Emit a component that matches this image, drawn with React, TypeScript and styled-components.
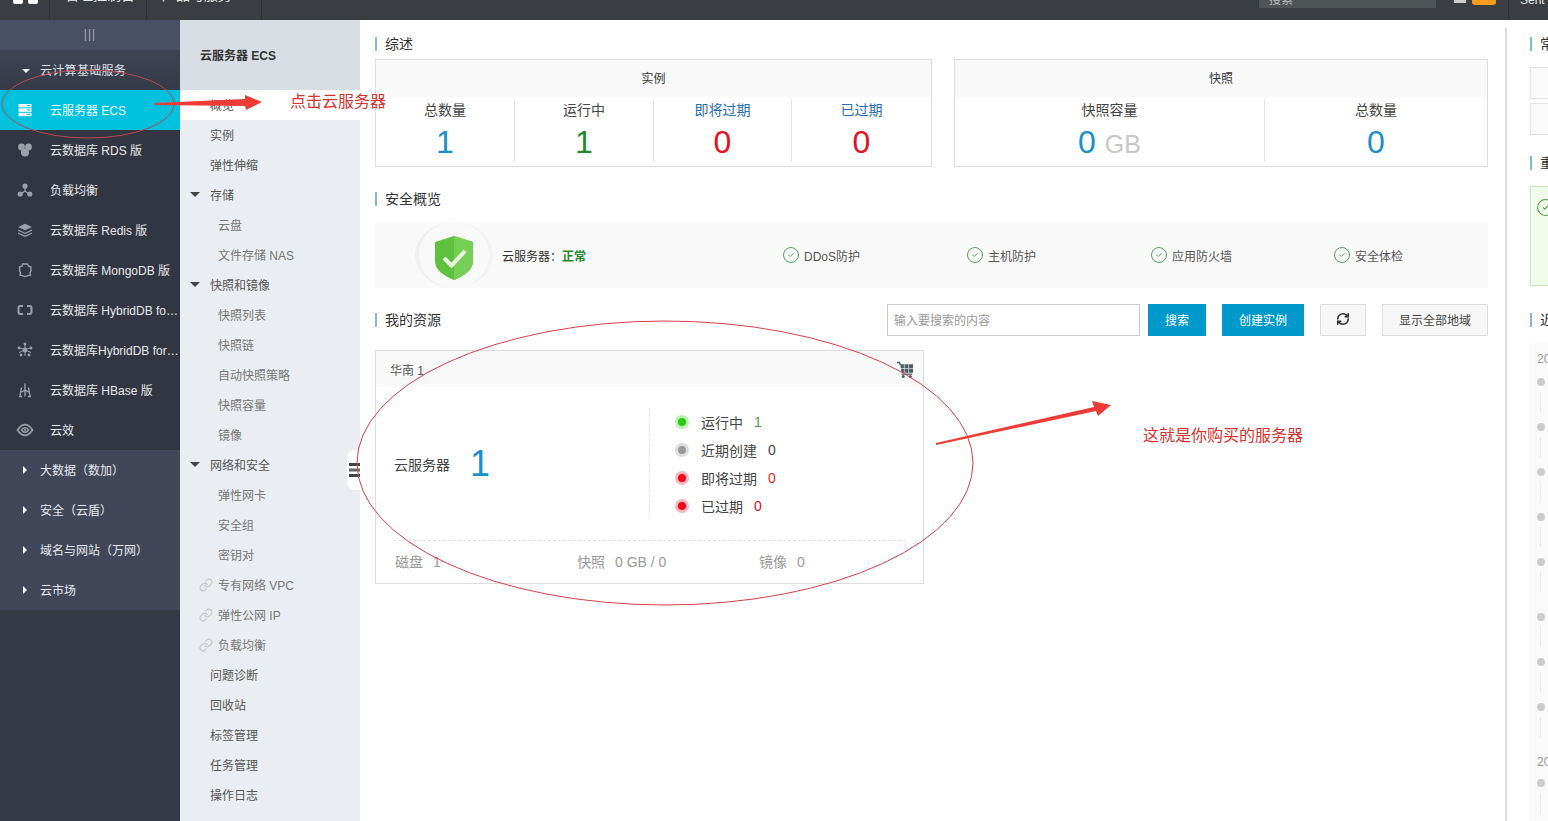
import React from 'react';
import styled, { createGlobalStyle } from 'styled-components';
import { CircleCheck, Link, RefreshCw } from 'lucide-react';

const GlobalStyle = createGlobalStyle`
  html, body { margin: 0; padding: 0; background: #fff; }
  body {
    font-family: "Liberation Sans", "Noto Sans CJK SC", sans-serif;
    font-size: 12px;
    color: #333;
  }
  * { box-sizing: border-box; }
`;

type IconKind = 'ecs' | 'rds' | 'slb' | 'redis' | 'mongo' | 'hybrid' | 'star' | 'hbase' | 'eye';

const ProductIcon: React.FC<{ kind: IconKind; active?: boolean }> = ({ kind, active }) => {
  const c = active ? '#fff' : '#9ba0aa';
  return (
    <svg width="18" height="18" viewBox="0 0 18 18" fill={c} stroke="none">
      {kind === 'ecs' && (
        <>
          <rect x="2.5" y="3" width="13" height="3.4" />
          <rect x="2.5" y="7.4" width="13" height="3.4" />
          <rect x="2.5" y="11.8" width="13" height="3.4" />
          <rect x="11" y="4" width="3" height="1" fill="#00c1de" />
          <rect x="11" y="8.4" width="3" height="1" fill="#00c1de" />
          <rect x="11" y="12.8" width="3" height="1" fill="#00c1de" />
        </>
      )}
      {kind === 'rds' && (
        <>
          <circle cx="5.5" cy="6" r="3.4" />
          <circle cx="12.5" cy="6" r="3.4" />
          <circle cx="9" cy="11.5" r="4" />
        </>
      )}
      {kind === 'slb' && (
        <>
          <circle cx="9" cy="5" r="2.6" />
          <circle cx="4.2" cy="13" r="2.6" />
          <circle cx="13.8" cy="13" r="2.6" />
          <path d="M9 7v3M9 10l-4 3M9 10l4 3" stroke={c} strokeWidth="1.2" fill="none" />
        </>
      )}
      {kind === 'redis' && (
        <>
          <path d="M9 2.8 16 6 9 9.2 2 6z" />
          <path d="M2 8.6 9 11.8l7-3.2v1.2L9 13 2 9.8z" />
          <path d="M2 11.4 9 14.6l7-3.2v1.4L9 16 2 12.8z" />
        </>
      )}
      {kind === 'mongo' && (
        <g fill="none" stroke={c} strokeWidth="1.4">
          <path d="M6.5 3h5l1 2.2 2.4.6v4.4l-1 1.6.6 2.4-2.4.4L9 15.6l-2.6-1-2.4-.4.6-2.4-1-1.6V5.8l2.4-.6z" />
        </g>
      )}
      {kind === 'hybrid' && (
        <g fill="none" stroke={c} strokeWidth="2">
          <path d="M7 5H4.5Q2.5 5 2.5 7v4q0 2 2 2H7" />
          <path d="M11 5h2.5q2 0 2 2v4q0 2-2 2H11" />
        </g>
      )}
      {kind === 'star' && (
        <>
          <path d="M9 3v12M3 6.5l12 5M15 6.5l-12 5" stroke={c} strokeWidth="1" />
          <circle cx="9" cy="9" r="2.4" />
          <circle cx="9" cy="3" r="1.4" />
          <circle cx="3" cy="7" r="1.4" />
          <circle cx="15" cy="7" r="1.4" />
          <circle cx="5" cy="14" r="1.4" />
          <circle cx="13" cy="14" r="1.4" />
        </>
      )}
      {kind === 'hbase' && (
        <g fill="none" stroke={c} strokeWidth="1.4">
          <path d="M9 2.5v13M5.5 6.5 4 15M12.5 6.5 14 15M3 15.5h3M12 15.5h3M9 9 5.5 11M9 9l3.5 2" />
        </g>
      )}
      {kind === 'eye' && (
        <>
          <path d="M1.5 9Q5 3.6 9 3.6T16.5 9Q13 14.4 9 14.4T1.5 9z" fill="none" stroke={c} strokeWidth="1.7" />
          <path d="M5.5 9Q7 6.8 9 6.8T12.5 9Q11 11.2 9 11.2T5.5 9z" fill="none" stroke={c} strokeWidth="1.4" />
          <circle cx="9" cy="9" r="1" />
        </>
      )}
    </svg>
  );
};

const CartIcon: React.FC = () => (
  <svg width="16" height="17" viewBox="0 0 16 17">
    <path d="M0 1.5h2.4l1 2.6" fill="none" stroke="#4c5d68" strokeWidth="1.5" />
    <path d="M3.2 3.2H16v8.6H4.6z" fill="#4c5d68" />
    <path d="M7.4 3.2v8.6M11.6 3.2v8.6M3.8 7.5H16" stroke="#dfe5e8" strokeWidth="0.7" />
    <path d="M4.6 13.2h10.6" stroke="#4c5d68" strokeWidth="1.3" />
    <circle cx="6.2" cy="15.4" r="1.5" fill="#4c5d68" />
    <circle cx="13.4" cy="15.4" r="1.5" fill="#4c5d68" />
  </svg>
);

const products: { kind: IconKind; label: string; active?: boolean }[] = [
  { kind: 'ecs', label: '云服务器 ECS', active: true },
  { kind: 'rds', label: '云数据库 RDS 版' },
  { kind: 'slb', label: '负载均衡' },
  { kind: 'redis', label: '云数据库 Redis 版' },
  { kind: 'mongo', label: '云数据库 MongoDB 版' },
  { kind: 'hybrid', label: '云数据库 HybridDB for MySQL' },
  { kind: 'star', label: '云数据库HybridDB for PostgreSQL' },
  { kind: 'hbase', label: '云数据库 HBase 版' },
  { kind: 'eye', label: '云效' },
];

const groups = ['大数据（数加）', '安全（云盾）', '域名与网站（万网）', '云市场'];

type SubKind = 'active' | 'top' | 'open' | 'child' | 'link';

const subItems: { kind: SubKind; label: string }[] = [
  { kind: 'active', label: '概览' },
  { kind: 'top', label: '实例' },
  { kind: 'top', label: '弹性伸缩' },
  { kind: 'open', label: '存储' },
  { kind: 'child', label: '云盘' },
  { kind: 'child', label: '文件存储 NAS' },
  { kind: 'open', label: '快照和镜像' },
  { kind: 'child', label: '快照列表' },
  { kind: 'child', label: '快照链' },
  { kind: 'child', label: '自动快照策略' },
  { kind: 'child', label: '快照容量' },
  { kind: 'child', label: '镜像' },
  { kind: 'open', label: '网络和安全' },
  { kind: 'child', label: '弹性网卡' },
  { kind: 'child', label: '安全组' },
  { kind: 'child', label: '密钥对' },
  { kind: 'link', label: '专有网络 VPC' },
  { kind: 'link', label: '弹性公网 IP' },
  { kind: 'link', label: '负载均衡' },
  { kind: 'top', label: '问题诊断' },
  { kind: 'top', label: '回收站' },
  { kind: 'top', label: '标签管理' },
  { kind: 'top', label: '任务管理' },
  { kind: 'top', label: '操作日志' },
];

const instanceStats = [
  { label: '总数量', value: '1', color: '#1a8fc9' },
  { label: '运行中', value: '1', color: '#1f8a2e' },
  { label: '即将过期', value: '0', color: '#e8101e', link: true },
  { label: '已过期', value: '0', color: '#e8101e', link: true },
];

const statuses = [
  { label: '运行中', value: '1', dot: '#2ac913', ring: '#bdf0b4', color: '#4f9f4a' },
  { label: '近期创建', value: '0', dot: '#999', ring: '#ddd', color: '#444' },
  { label: '即将过期', value: '0', dot: '#f2041c', ring: '#fbb9bb', color: '#d9301e' },
  { label: '已过期', value: '0', dot: '#f2041c', ring: '#fbb9bb', color: '#d9101e' },
];

const timeline: { year?: boolean; height: number }[] = [
  { year: true, height: 35 },
  { height: 45 },
  { height: 45 },
  { height: 45 },
  { height: 45 },
  { height: 55 },
  { height: 45 },
  { height: 45 },
  { height: 43 },
  { year: true, height: 33 },
  { height: 45 },
];

const App: React.FC = () => (
  <Page>
    <GlobalStyle />
    <TopBar>
      <TopLogo>
        <span />
        <span />
      </TopLogo>
      <TopTab $width={97}>管理控制台</TopTab>
      <TopTab $width={115}>产品与服务</TopTab>
      <TopRight>
        <TopSearch>搜索</TopSearch>
        <TopBell />
        <TopBadge />
        <TopUser>Sent</TopUser>
      </TopRight>
    </TopBar>

    <Body>
      <Sidebar>
        <Collapse>|||</Collapse>
        <GroupHead>
          <CaretDown />
          <RowText>云计算基础服务</RowText>
        </GroupHead>
        {products.map((item) => (
          <ProductRow key={item.label} $active={item.active}>
            <ProductIcon kind={item.kind} active={item.active} />
            <RowText>{item.label}</RowText>
          </ProductRow>
        ))}
        <ClosedGroups>
          {groups.map((group) => (
            <ClosedRow key={group}>
              <CaretRight />
              <RowText>{group}</RowText>
            </ClosedRow>
          ))}
        </ClosedGroups>
      </Sidebar>

      <SubNav>
        <SubTitle>云服务器 ECS</SubTitle>
        {subItems.map((item) => (
          <SubRow key={item.label + item.kind} $kind={item.kind}>
            {item.kind === 'open' && <SubCaret />}
            {item.kind === 'link' && (
              <LinkMark>
                <Link size={14} strokeWidth={2.4} />
              </LinkMark>
            )}
            {item.label}
          </SubRow>
        ))}
      </SubNav>

      <Main>
        <SectionTitle>综述</SectionTitle>
        <Overview>
          <StatCard $width={557}>
            <CardHead>实例</CardHead>
            <StatGrid $columns="138px 139px 138px 1fr">
              {instanceStats.map((stat) => (
                <Stat key={stat.label}>
                  <StatLabel $link={stat.link}>{stat.label}</StatLabel>
                  <StatValue $color={stat.color}>{stat.value}</StatValue>
                </Stat>
              ))}
            </StatGrid>
          </StatCard>
          <StatCard $width={534}>
            <CardHead>快照</CardHead>
            <StatGrid $columns="309px 1fr">
              <Stat>
                <StatLabel>快照容量</StatLabel>
                <StatValue $color="#1a8fc9">
                  0 <StatUnit>GB</StatUnit>
                </StatValue>
              </Stat>
              <Stat>
                <StatLabel>总数量</StatLabel>
                <StatValue $color="#1a8fc9">0</StatValue>
              </Stat>
            </StatGrid>
          </StatCard>
        </Overview>

        <SecurityTitle>安全概览</SecurityTitle>
        <SecurityBand>
          <SecurityStatus>
            <ShieldHalo>
              <svg width="38" height="44" viewBox="0 0 38 44">
                <path d="M19 0 38 6v19c0 9-9 15-19 19C9 40 0 34 0 25V6z" fill="#5fc13f" />
                <path d="M19 0 38 6v19c0 9-9 15-19 19z" fill="#75cf55" />
                <path d="M9 22l7.5 7.5L30 15" fill="none" stroke="#e8f7df" strokeWidth="4" />
              </svg>
            </ShieldHalo>
            <span>
              云服务器：<StatusOk>正常</StatusOk>
            </span>
          </SecurityStatus>
          {['DDoS防护', '主机防护', '应用防火墙', '安全体检'].map((label) => (
            <CheckItem key={label}>
              <CircleCheck size={18} strokeWidth={1.2} color="#3f9a48" />
              {label}
            </CheckItem>
          ))}
        </SecurityBand>

        <Toolbar>
          <ToolbarTitle>我的资源</ToolbarTitle>
          <SearchGroup>
            <SearchInput placeholder="输入要搜索的内容" readOnly />
            <ToolButton $primary $width={58}>搜索</ToolButton>
          </SearchGroup>
          <ToolButton $primary $width={82}>创建实例</ToolButton>
          <ToolButton $width={46}>
            <RefreshCw size={14} strokeWidth={2.8} color="#333" />
          </ToolButton>
          <ToolButton $width={106}>显示全部地域</ToolButton>
        </Toolbar>

        <RegionCard>
          <RegionHead>
            华南 1
            <CartIcon />
          </RegionHead>
          <RegionBody>
            <RegionMain>
              云服务器
              <RegionCount>1</RegionCount>
            </RegionMain>
            <StatusList>
              {statuses.map((status) => (
                <StatusRow key={status.label}>
                  <StatusDot $dot={status.dot} $ring={status.ring} />
                  {status.label}
                  <StatusCount $color={status.color}>{status.value}</StatusCount>
                </StatusRow>
              ))}
            </StatusList>
          </RegionBody>
          <RegionFoot>
            <span>磁盘<FootValue>1</FootValue></span>
            <span>快照<FootValue>0 GB / 0</FootValue></span>
            <span>镜像<FootValue>0</FootValue></span>
          </RegionFoot>
        </RegionCard>
      </Main>

      <RightPanel>
        <SectionTitle>常用操作</SectionTitle>
        <ShortcutBox />
        <ShortcutBox />
        <NoticeTitle>重要通知</NoticeTitle>
        <NoticeBox>
          <CircleCheck size={19} strokeWidth={1.3} color="#4f9a48" />
        </NoticeBox>
        <RecentTitle>近期动态</RecentTitle>
        <Timeline>
          {timeline.map((entry, i) => (
            <TimelineEntry key={i} style={{ height: entry.height }}>
              {entry.year ? <YearMark>2016</YearMark> : <TimelineDot />}
            </TimelineEntry>
          ))}
        </Timeline>
      </RightPanel>
    </Body>

    <HandleTab>
      <svg width="11" height="14" viewBox="0 0 11 14" fill="#444">
        <rect y="0" width="11" height="3" />
        <rect y="5.5" width="11" height="3" fill="#666" />
        <rect y="11" width="11" height="3" />
      </svg>
    </HandleTab>

    <Markup width="1548" height="821" viewBox="0 0 1548 821">
      <ellipse cx="88" cy="104" rx="86" ry="34" fill="none" stroke="#b8484e" strokeWidth="1" />
      <ellipse cx="665" cy="463" rx="308" ry="142" fill="none" stroke="#d8404a" strokeWidth="1" />
      <polygon points="155,103 245,99 245,95 262,102 246,110 245,106 155,105" fill="#ee3b36" />
      <polygon points="936,443 1094,407 1092,401 1111,405 1098,416 1096,411 936,445" fill="#ee3b36" />
    </Markup>
    <NoteOne>点击云服务器</NoteOne>
    <NoteTwo>这就是你购买的服务器</NoteTwo>
  </Page>
);

export default App;

const Page = styled.div`
  position: relative;
  width: 1548px;
  height: 821px;
  overflow: hidden;
  background: #fff;
`;

const TopBar = styled.div`
  display: flex;
  height: 20px;
  overflow: hidden;
  background: #3a3e42;
  color: #e8e8e8;
  font-size: 14px;
`;

const TopLogo = styled.div`
  display: flex;
  gap: 5px;
  width: 50px;
  padding-left: 13px;
  border-right: 1px solid #2f3235;

  span {
    width: 10px;
    height: 4px;
    background: #fff;
    border-radius: 0 0 2px 2px;
  }
`;

const TopTab = styled.div<{ $width: number }>`
  width: ${(p) => p.$width}px;
  height: 32px;
  padding-left: 15px;
  line-height: 14px;
  margin-top: -12px;
  border-right: 1px solid #2f3235;
  white-space: nowrap;
`;

const TopRight = styled.div`
  display: flex;
  margin-left: auto;
`;

const TopSearch = styled.div`
  width: 177px;
  height: 8px;
  padding-left: 10px;
  background: #4f5457;
  color: #bbb;
  font-size: 12px;
  line-height: 0;
`;

const TopBell = styled.div`
  width: 12px;
  height: 3px;
  margin-left: 18px;
  background: #ccc;
`;

const TopBadge = styled.div`
  width: 24px;
  height: 5px;
  margin-left: 6px;
  background: #f89c1e;
  border-radius: 0 0 3px 3px;
`;

const TopUser = styled.div`
  width: 40px;
  height: 20px;
  margin-left: 12px;
  padding-left: 11px;
  border-left: 1px solid #2f3235;
  font-size: 12px;
  line-height: 0;
`;

const Body = styled.div`
  display: flex;
  height: 801px;
`;

const Sidebar = styled.aside`
  flex: none;
  width: 180px;
  background: #363a47;
  color: #fff;
`;

const Collapse = styled.div`
  height: 30px;
  background: #4a5064;
  color: #aab;
  font-size: 12px;
  line-height: 29px;
  text-align: center;
  letter-spacing: 1px;
`;

const RowText = styled.span`
  min-width: 0;
  flex: 1;
  padding-bottom: 2px;
  overflow: hidden;
  white-space: nowrap;
  text-overflow: ellipsis;
`;

const GroupHead = styled.div`
  display: flex;
  align-items: center;
  height: 40px;
  padding-left: 22px;
  gap: 10px;
  background: linear-gradient(#3f4455, #353a48);
  color: #dfe2e8;
  letter-spacing: 0.3px;
`;

const CaretDown = styled.i`
  width: 0;
  height: 0;
  border-style: solid;
  border-width: 4px 4px 0;
  border-color: #fff transparent transparent;
  margin-top: 2px;
`;

const CaretRight = styled.i`
  width: 0;
  height: 0;
  margin: 0 13px 0 23px;
  border-style: solid;
  border-width: 4px 0 4px 4px;
  border-color: transparent transparent transparent #fff;
`;

const ProductRow = styled.div<{ $active?: boolean }>`
  display: flex;
  align-items: center;
  gap: 16px;
  height: 40px;
  padding-left: 16px;
  background: ${(p) => (p.$active ? '#00c1de' : '#323643')};
  color: ${(p) => (p.$active ? '#eafcff' : '#e6e8ec')};
`;

const ClosedGroups = styled.div`
  background: #414759;
`;

const ClosedRow = styled.div`
  display: flex;
  align-items: center;
  height: 40px;
  color: #e6e8ec;
`;

const SubNav = styled.nav`
  flex: none;
  width: 180px;
  background: #eaedf1;
`;

const SubTitle = styled.div`
  height: 70px;
  padding: 28px 0 0 20px;
  background: #d9dee4;
  color: #333;
  font-weight: 700;
  line-height: 17px;
`;

const subPadding: Record<SubKind, number> = { active: 30, top: 30, open: 30, child: 38, link: 38 };
const subColor: Record<SubKind, string> = { active: '#555', top: '#555', open: '#555', child: '#777', link: '#777' };

const SubRow = styled.div<{ $kind: SubKind }>`
  position: relative;
  height: 30px;
  padding-left: ${(p) => subPadding[p.$kind]}px;
  background: ${(p) => (p.$kind === 'active' ? '#fff' : 'transparent')};
  color: ${(p) => subColor[p.$kind]};
  line-height: 32px;
  white-space: nowrap;
`;

const SubCaret = styled.i`
  position: absolute;
  left: 10px;
  top: 12px;
  border-style: solid;
  border-width: 5px 5px 0;
  border-color: #444 transparent transparent;
`;

const LinkMark = styled.span`
  position: absolute;
  left: 19px;
  top: 8px;
  display: flex;
  color: #ccc;
`;

const Main = styled.main`
  flex: none;
  width: 1145px;
  padding: 17px 17px 0 15px;
`;

const SectionTitle = styled.h3`
  height: 14px;
  margin: 0;
  padding-left: 8px;
  border-left: 2px solid #88b7d5;
  color: #333;
  font-size: 14px;
  font-weight: 400;
  line-height: 14px;
  white-space: nowrap;
`;

const Overview = styled.div`
  display: flex;
  justify-content: space-between;
  margin-top: 8px;
`;

const StatCard = styled.section<{ $width: number }>`
  width: ${(p) => p.$width}px;
  height: 108px;
  border: 1px solid #ddd;
`;

const CardHead = styled.div`
  height: 37px;
  background: #f9f9f9;
  line-height: 39px;
  text-align: center;
`;

const StatGrid = styled.div<{ $columns: string }>`
  display: grid;
  grid-template-columns: ${(p) => p.$columns};
  padding-top: 2px;
`;

const Stat = styled.div`
  height: 63px;
  border-left: 1px solid #e3e3e3;
  text-align: center;

  &:first-child {
    border-left: 0;
  }
`;

const StatLabel = styled.div<{ $link?: boolean }>`
  padding-top: 1px;
  color: ${(p) => (p.$link ? '#2a6db5' : '#444')};
  font-size: 14px;
  line-height: 20px;
`;

const StatValue = styled.div<{ $color: string }>`
  margin-top: 3px;
  color: ${(p) => p.$color};
  font-size: 32px;
  line-height: 38px;
`;

const StatUnit = styled.span`
  color: #c8c8c8;
  font-size: 25px;
`;

const SecurityTitle = styled(SectionTitle)`
  margin-top: 25px;
`;

const SecurityBand = styled.div`
  display: grid;
  grid-template-columns: 407px 184px 184px 183px 1fr;
  align-items: center;
  height: 66px;
  margin-top: 16px;
  background: #f9f9f9;
`;

const SecurityStatus = styled.div`
  display: flex;
  align-items: center;
  gap: 9px;
  padding-left: 40px;
`;

const ShieldHalo = styled.div`
  display: flex;
  align-items: center;
  justify-content: center;
  width: 78px;
  height: 66px;
  padding-top: 6px;
  border-left: 4px solid #f0f0f0;
  border-right: 4px solid #f3f3f3;
  border-radius: 50%;
`;

const StatusOk = styled.b`
  color: #1f8a2e;
`;

const CheckItem = styled.div`
  display: flex;
  align-items: center;
  gap: 4px;
  color: #555;
`;

const Toolbar = styled.div`
  display: flex;
  align-items: center;
  gap: 16px;
  height: 32px;
  margin-top: 16px;
`;

const ToolbarTitle = styled(SectionTitle)`
  margin-right: auto;
`;

const SearchGroup = styled.div`
  display: flex;
  gap: 8px;
`;

const SearchInput = styled.input`
  width: 253px;
  height: 32px;
  padding: 2px 6px 0;
  border: 1px solid #ccc;
  outline: 0;
  font: inherit;

  &::placeholder {
    color: #999;
  }
`;

const ToolButton = styled.button<{ $primary?: boolean; $width: number }>`
  display: flex;
  align-items: center;
  justify-content: center;
  width: ${(p) => p.$width}px;
  height: 32px;
  padding: 0 0 2px;
  border: 1px solid ${(p) => (p.$primary ? '#0099cc' : '#ddd')};
  background: ${(p) => (p.$primary ? '#0099cc' : '#f7f7f7')};
  color: ${(p) => (p.$primary ? '#fff' : '#444')};
  font: inherit;
`;

const RegionCard = styled.section`
  width: 549px;
  height: 234px;
  margin-top: 14px;
  border: 1px solid #ddd;
`;

const RegionHead = styled.div`
  display: flex;
  align-items: center;
  justify-content: space-between;
  height: 36px;
  padding: 0 10px 0 14px;
  background: #f9f9f9;
  color: #555;
`;

const RegionBody = styled.div`
  display: flex;
  height: 153px;
  padding-top: 21px;
`;

const RegionMain = styled.div`
  display: flex;
  align-items: center;
  width: 273px;
  height: 112px;
  padding-left: 18px;
  color: #444;
  font-size: 14px;
`;

const RegionCount = styled.span`
  margin-left: 20px;
  color: #1a8fc9;
  font-size: 36px;
  line-height: 36px;
`;

const StatusList = styled.div`
  height: 110px;
  padding-left: 25px;
  border-left: 1px dashed #e2e2e2;
`;

const StatusRow = styled.div`
  display: flex;
  align-items: center;
  height: 28px;
  color: #444;
  font-size: 14px;
`;

const StatusDot = styled.i<{ $dot: string; $ring: string }>`
  width: 14px;
  height: 14px;
  margin-right: 12px;
  border: 3px solid ${(p) => p.$ring};
  border-radius: 50%;
  background: ${(p) => p.$dot};
`;

const StatusCount = styled.span<{ $color: string }>`
  margin-left: 11px;
  color: ${(p) => p.$color};
`;

const RegionFoot = styled.div`
  display: grid;
  grid-template-columns: repeat(3, 182px);
  height: 43px;
  margin: 0 17px;
  padding-left: 2px;
  border-top: 1px dashed #e2e2e2;
  color: #999;
  font-size: 14px;
  line-height: 43px;
`;

const FootValue = styled.span`
  margin-left: 10px;
`;

const RightPanel = styled.aside`
  flex: none;
  width: 43px;
  margin-top: 8px;
  padding: 9px 0 0 23px;
  border-left: 2px solid #ddd;
  overflow: hidden;
`;

const ShortcutBox = styled.div`
  width: 100px;
  height: 32px;
  margin-top: 16px;
  border: 1px solid #e3e3e3;
  background: #fafafa;

  & + & {
    margin-top: 4px;
  }
`;

const NoticeTitle = styled(SectionTitle)`
  margin-top: 21px;
`;

const NoticeBox = styled.div`
  width: 100px;
  height: 100px;
  margin-top: 16px;
  padding: 11px 0 0 5px;
  border: 1px solid #cfe3c0;
  background: #f1fbe9;
`;

const RecentTitle = styled(SectionTitle)`
  margin-top: 27px;
`;

const Timeline = styled.div`
  width: 100px;
  margin-top: 16px;
  padding-left: 7px;
  background: #fafafa;
`;

const TimelineEntry = styled.div`
  overflow: hidden;
`;

const YearMark = styled.div`
  color: #999;
  font-size: 12px;
  line-height: 32px;
`;

const TimelineDot = styled.div`
  position: relative;
  width: 8px;
  height: 8px;
  border-radius: 50%;
  background: #ccc;

  &::after {
    content: '';
    position: absolute;
    left: 3px;
    top: 14px;
    width: 1px;
    height: 20px;
    background: #e8e8e8;
  }
`;

const HandleTab = styled.div`
  position: absolute;
  left: 347px;
  top: 450px;
  display: flex;
  align-items: center;
  justify-content: flex-end;
  width: 13px;
  height: 40px;
  border-radius: 8px 0 0 8px;
  background: #fff;
`;

const Markup = styled.svg`
  position: absolute;
  left: 0;
  top: 0;
  pointer-events: none;
`;

const NoteOne = styled.div`
  position: absolute;
  left: 290px;
  top: 91px;
  color: #d9312f;
  font-size: 16px;
  line-height: 22px;
  white-space: nowrap;
`;

const NoteTwo = styled.div`
  position: absolute;
  left: 1143px;
  top: 425px;
  color: #d9312f;
  font-size: 16px;
  line-height: 22px;
  white-space: nowrap;
`;
